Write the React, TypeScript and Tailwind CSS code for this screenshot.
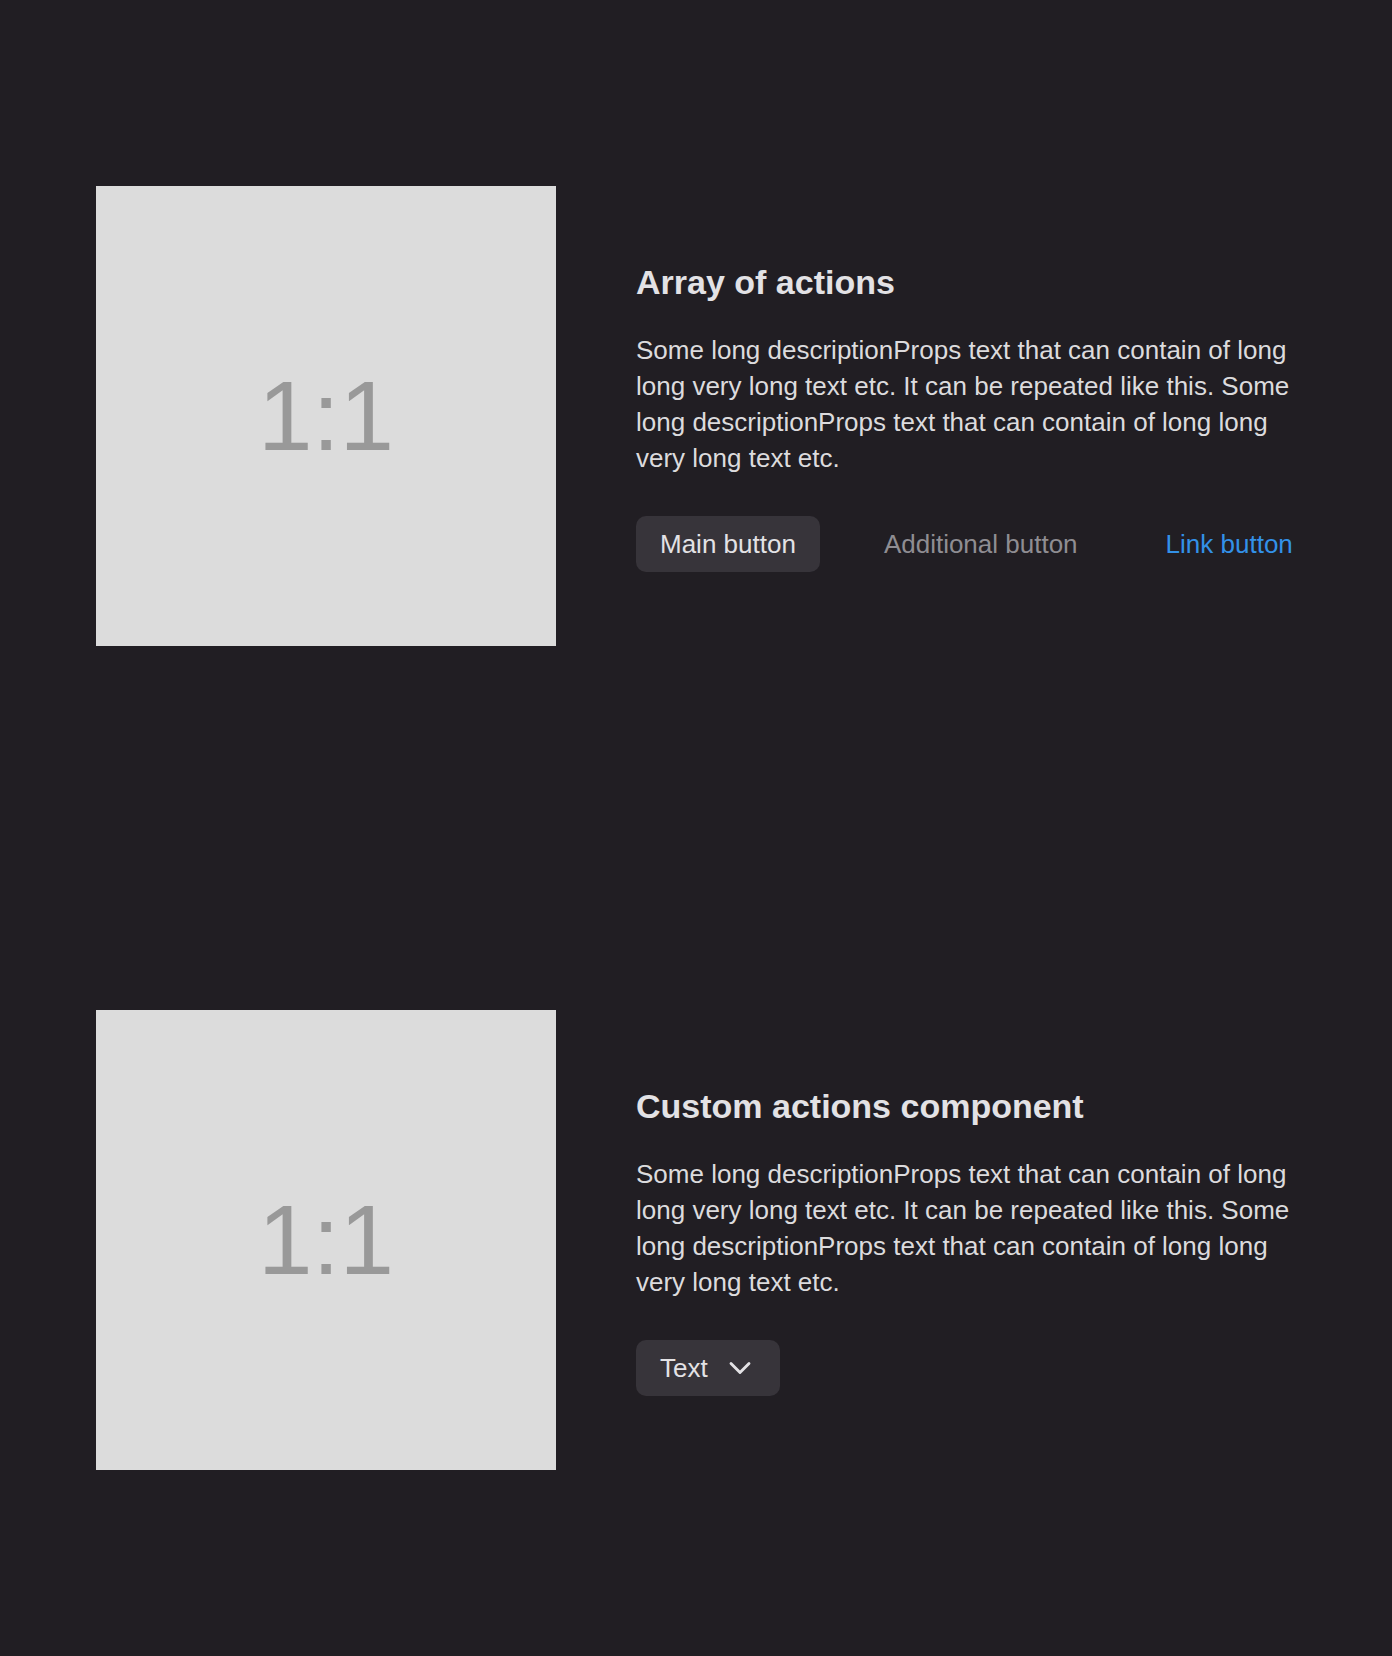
import { ChevronDown } from 'lucide-react';

const description =
  'Some long descriptionProps text that can contain of long long very long text etc. It can be repeated like this. Some long descriptionProps text that can contain of long long very long text etc.';

function Placeholder() {
  return (
    <div className="w-[460px] h-[460px] shrink-0 bg-[#dcdcdc] flex items-center justify-center">
      <span className="text-[98px] leading-none text-[#999999]">1:1</span>
    </div>
  );
}

function Section({ title, children }: { title: string; children: React.ReactNode }) {
  return (
    <div className="flex items-center gap-[80px]">
      <Placeholder />
      <div className="w-[660px] pt-[2px] flex flex-col items-start">
        <h2 className="text-[34px] leading-[40px] font-bold text-[#e3e2e5] mb-[30px]">{title}</h2>
        <p className="text-[26px] leading-[36px] text-[#dcdbdd]">{description}</p>
        <div className="mt-10">{children}</div>
      </div>
    </div>
  );
}

export default function App() {
  return (
    <div
      className="min-h-[1656px] w-full bg-[#211e23] flex flex-col items-center pt-[186px] pb-[186px] gap-[364px]"
      style={{ fontFamily: '"Liberation Sans", Arial, sans-serif' }}
    >
      <Section title="Array of actions">
        <div className="flex items-center gap-10 whitespace-nowrap">
          <button className="h-[56px] px-6 rounded-[10px] bg-[#37343a] text-[26px] text-[#e3e2e5]">
            Main button
          </button>
          <button className="h-[56px] px-6 text-[26px] text-[#8f8d92]">Additional button</button>
          <button className="h-[56px] px-6 text-[26px] text-[#3391e8]">Link button</button>
        </div>
      </Section>

      <Section title="Custom actions component">
        <button className="h-[56px] pl-6 pr-[22px] rounded-[10px] bg-[#37343a] text-[26px] text-[#e3e2e5] flex items-center gap-[14px]">
          Text
          <ChevronDown size={36} strokeWidth={1.9} />
        </button>
      </Section>
    </div>
  );
}
